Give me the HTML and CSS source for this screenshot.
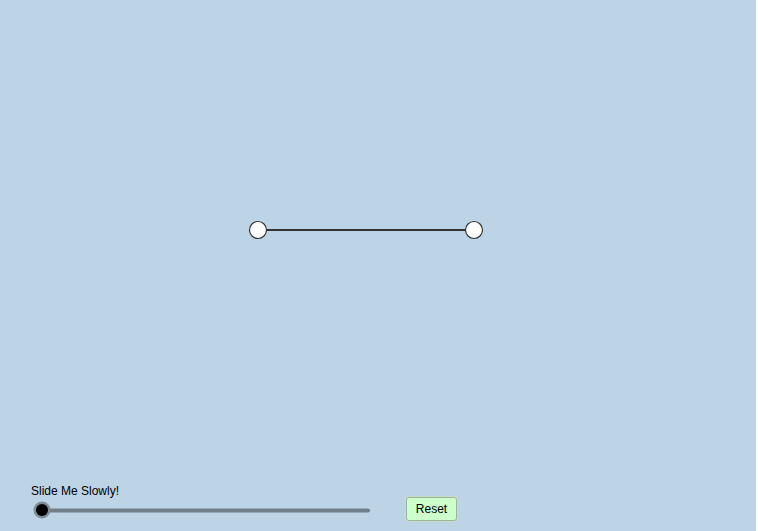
FILE: index.html
```html
<!DOCTYPE html>
<html>
<head>
<meta charset="utf-8">
<link rel="stylesheet" href="styles.css">
</head>
<body>
<div class="applet">
  <svg class="board" width="756" height="531" viewBox="0 0 756 531">
    <line x1="258" y1="230" x2="474" y2="230" stroke="#333" stroke-width="2"/>
    <circle cx="258" cy="230" r="8.5" fill="#fff" stroke="#333" stroke-width="1.2"/>
    <circle cx="474" cy="230" r="8.5" fill="#fff" stroke="#333" stroke-width="1.2"/>
    <line x1="44" y1="510.5" x2="368" y2="510.5" stroke="#717f8b" stroke-width="4" stroke-linecap="round"/>
    <circle cx="42" cy="510" r="8.5" fill="#7f8b95"/>
    <circle cx="42" cy="510" r="6" fill="#000"/>
  </svg>
  <div class="slider-label">Slide Me Slowly!</div>
  <button class="reset">Reset</button>
</div>
</body>
</html>
```
FILE: styles.css
```css
html, body {
  margin: 0;
  padding: 0;
  background: #fff;
}
.applet {
  position: relative;
  width: 756px;
  height: 531px;
  background: #bdd3e6;
  font-family: "Liberation Sans", Arial, sans-serif;
}
.board {
  position: absolute;
  left: 0;
  top: 0;
}
.slider-label {
  position: absolute;
  left: 31px;
  top: 484px;
  font-size: 12px;
  color: #000;
}
.reset {
  position: absolute;
  left: 406px;
  top: 497px;
  width: 51px;
  height: 24px;
  background: #ccffcc;
  border: 1px solid #9db59d;
  border-radius: 3px;
  font-family: "Liberation Sans", Arial, sans-serif;
  font-size: 12px;
  color: #000;
  padding: 0;
  box-shadow: 0 0 0 1px #c7dcc7;
}
```
